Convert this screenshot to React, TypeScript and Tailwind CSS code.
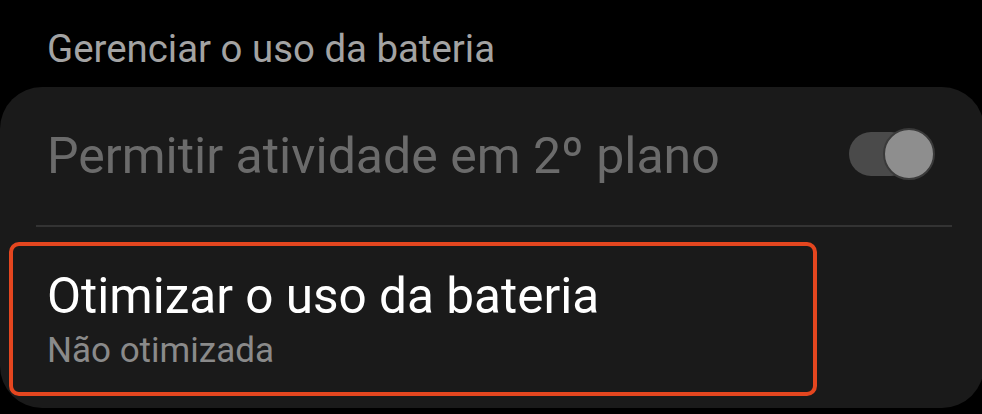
export default function App() {
  return (
    <div className="w-[982px] h-[414px] bg-black overflow-hidden font-['Roboto',sans-serif]">
      <div className="pl-[47px] pt-[26px] h-[87px]">
        <h2 className="text-[38.4px] leading-[46px] text-[#a3a3a3]">Gerenciar o uso da bateria</h2>
      </div>
      <div className="mr-[-2px] h-[321px] rounded-[42px] bg-[#1a1a1a]">
        <div className="flex h-[138px] items-center justify-between pl-[47px] pr-[49px]">
          <span className="text-[50px] leading-[58px] text-[#6b6b6b]">Permitir atividade em 2º plano</span>
          <div className="relative mb-[4px] h-[52px] w-[86px]">
            <div className="absolute left-0 top-[4px] h-[44px] w-[64px] rounded-full bg-[#4a4a4a]" />
            <div className="absolute right-0 top-0 h-[52px] w-[52px] rounded-full bg-[#8e8e8e] border-[2px] border-[#3a3a3a]" />
          </div>
        </div>
        <div className="ml-[36px] mr-[32px] h-[2px] bg-[#333333]" />
        <div className="ml-[9px] mt-[15px] w-[808px] h-[154px] rounded-[10px] border-[4px] border-[#e4461f] pl-[34px] pt-[21px]">
          <div className="text-[49.5px] leading-[58px] text-white">Otimizar o uso da bateria</div>
          <div className="mt-[6px] text-[35px] leading-[40px] text-[#8a8a8a]">Não otimizada</div>
        </div>
      </div>
    </div>
  );
}
